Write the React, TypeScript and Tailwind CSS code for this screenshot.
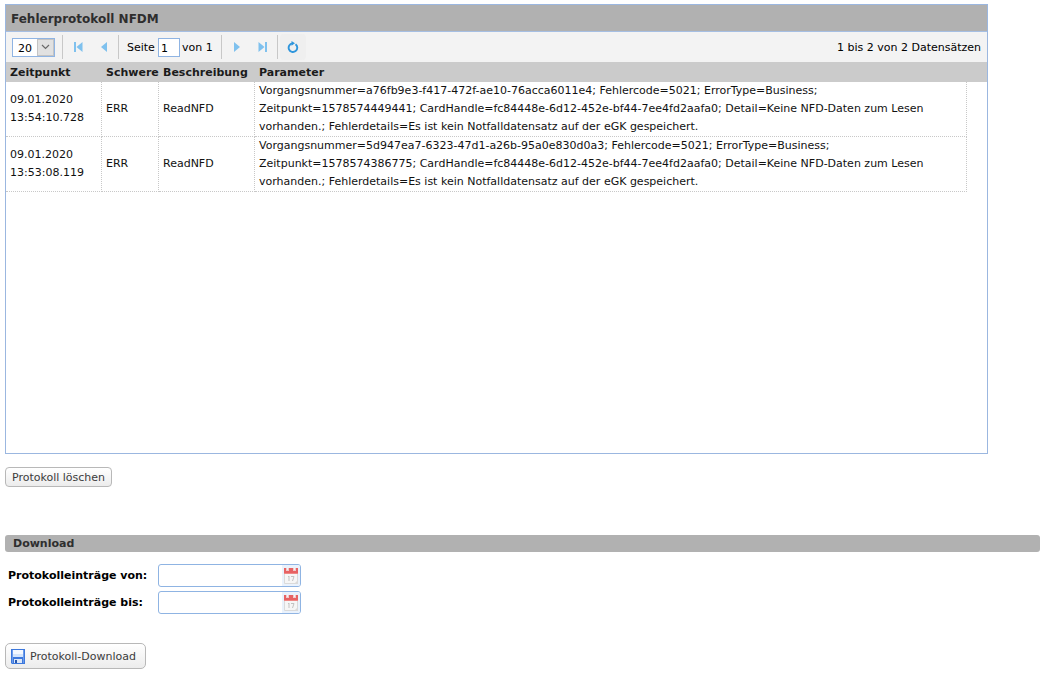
import { useState } from "react";

const entries = [
  {
    date: "09.01.2020",
    time: "13:54:10.728",
    level: "ERR",
    description: "ReadNFD",
    parameters: [
      "Vorgangsnummer=a76fb9e3-f417-472f-ae10-76acca6011e4; Fehlercode=5021; ErrorType=Business;",
      "Zeitpunkt=1578574449441; CardHandle=fc84448e-6d12-452e-bf44-7ee4fd2aafa0; Detail=Keine NFD-Daten zum Lesen",
      "vorhanden.; Fehlerdetails=Es ist kein Notfalldatensatz auf der eGK gespeichert.",
    ],
  },
  {
    date: "09.01.2020",
    time: "13:53:08.119",
    level: "ERR",
    description: "ReadNFD",
    parameters: [
      "Vorgangsnummer=5d947ea7-6323-47d1-a26b-95a0e830d0a3; Fehlercode=5021; ErrorType=Business;",
      "Zeitpunkt=1578574386775; CardHandle=fc84448e-6d12-452e-bf44-7ee4fd2aafa0; Detail=Keine NFD-Daten zum Lesen",
      "vorhanden.; Fehlerdetails=Es ist kein Notfalldatensatz auf der eGK gespeichert.",
    ],
  },
];

function PagerButton({ label, path }: { label: string; path: string }) {
  return (
    <button type="button" aria-label={label} className="flex size-[26px] items-center justify-center">
      <svg width="10" height="10" viewBox="0 0 10 10" fill="#7fc1ee">
        <path d={path} />
      </svg>
    </button>
  );
}

function Separator() {
  return <span className="h-6 w-px bg-[#c8c8c8]" />;
}

function CalendarIcon() {
  return (
    <svg width="14" height="16" viewBox="0 0 14 16">
      <path d="M.5 5.500h13v10H.5z" fill="#f6f6f6" stroke="#dadada" />
      <path d="M0 0h14v5H0z" fill="#e76263" />
      <path d="M0 5h14v1H0z" fill="#ef8886" />
      <path d="M2 0h3v3H2zM9 0h3v3H9z" fill="#efc9c9" />
      <path d="M3 0h1v2H3zM10 0h1v2h-1z" fill="#faf0f0" />
      <path d="M4 9l1-1v5M7 8.500h3l-1.500 4.500" fill="none" stroke="#c2c2c2" />
      <path d="M10 16l4-4v4z" fill="#dadada" />
    </svg>
  );
}

function DateField({ id, label }: { id: string; label: string }) {
  return (
    <div className="flex items-center">
      <label htmlFor={id} className="w-[150px] pt-0.5 text-[11px] font-bold">
        {label}
      </label>
      <div className="flex h-[23px] w-[143px] overflow-hidden rounded-[3px] border border-[#8fb4e3] bg-white">
        <input id={id} type="text" className="min-w-0 flex-1 px-1 text-[11px] outline-none" />
        <button
          type="button"
          aria-label={`${label} Kalender`}
          className="flex w-[18px] items-center justify-center bg-[#eaf2fc]"
        >
          <CalendarIcon />
        </button>
      </div>
    </div>
  );
}

export default function App() {
  const [page, setPage] = useState("1");
  const headCell = "overflow-hidden pt-0.5 pl-1 text-left text-[11px] font-bold whitespace-nowrap";
  const cell = "border-r border-b border-dotted border-[#c8c8c8] pl-1 text-[11px] leading-[18px]";

  return (
    <main className="pt-1 pr-0.5 pl-[5px] font-['Verdana','DejaVu_Sans',sans-serif] text-black">
      <section className="mr-[52px] min-h-[450px] border border-[#9bb7e0]">
        <h1 className="flex h-[27px] items-center border-b border-[#a6bfe3] bg-[#b1b1b1] pt-0.5 pl-[5px] text-[12px] font-bold text-[#2e2e2e]">
          Fehlerprotokoll NFDM
        </h1>
        <div className="flex h-[30px] items-center bg-[#f3f3f3] px-1.5 text-[11px]">
          <div className="relative mr-[7px] h-[19px] w-[43px] border border-[#8fb4e3] bg-white">
            <select
              aria-label="Einträge pro Seite"
              defaultValue="20"
              className="block h-full w-full appearance-none pt-0.5 pl-[5px] text-[11px] outline-none"
            >
              <option>20</option>
              <option>50</option>
            </select>
            <span className="pointer-events-none absolute inset-y-0 right-0 flex w-[17px] items-center justify-center border border-[#c4c4c4] bg-[#e1e1e1]">
              <svg width="9" height="6" viewBox="0 0 9 6" fill="none" stroke="#6a6a6a" strokeWidth="1.200">
                <path d="M1 1l3.500 3.500L8 1" />
              </svg>
            </span>
          </div>
          <Separator />
          <div className="ml-0.5 flex">
            <PagerButton label="Erste Seite" path="M1 0h2v10H1zM9.500 0v10L3.500 5z" />
            <PagerButton label="Vorherige Seite" path="M8 0v10L2 5z" />
          </div>
          <span className="mr-2 ml-px flex">
            <Separator />
          </span>
          <label htmlFor="page" className="w-[31px] pt-0.5">
            Seite
          </label>
          <input
            id="page"
            value={page}
            onChange={(e) => setPage(e.target.value)}
            className="mr-0.5 h-[19px] w-[22px] border border-[#8fb4e3] bg-white pt-0.5 pl-0.5 text-[11px] outline-none"
          />
          <span className="w-[39px] pt-0.5 whitespace-nowrap">von 1</span>
          <Separator />
          <div className="ml-0.5 flex">
            <PagerButton label="Nächste Seite" path="M2 0v10l6-5z" />
            <PagerButton label="Letzte Seite" path="M.5 0v10l6-5zM7 0h2v10H7z" />
          </div>
          <span className="mr-0.5 ml-px flex">
            <Separator />
          </span>
          <button
            type="button"
            aria-label="Aktualisieren"
            className="flex size-[26px] items-center justify-center rounded bg-[#efefef]"
          >
            <svg width="12" height="12" viewBox="0 0 12 12">
              <path d="M8.500 3.200A4.300 4.300 0 1 1 5.500 2.400" fill="none" stroke="#2e95dc" strokeWidth="1.900" />
              <path d="M4.500 0L8 2.300 4.500 4.800z" fill="#2e95dc" />
            </svg>
          </button>
          <span className="ml-auto pt-0.5 whitespace-nowrap">1 bis 2 von 2 Datensätzen</span>
        </div>
        <table className="w-full table-fixed border-separate border-spacing-0">
          <colgroup>
            <col className="w-24" />
            <col className="w-[57px]" />
            <col className="w-24" />
            <col />
            <col className="w-5" />
          </colgroup>
          <thead>
            <tr className="h-5 bg-[#cbcbcb] text-[#1b1b1b]">
              <th className={headCell}>Zeitpunkt</th>
              <th className={headCell}>Schwere</th>
              <th className={headCell}>Beschreibung</th>
              <th className={headCell}>Parameter</th>
              <td />
            </tr>
          </thead>
          <tbody className="text-[#111]">
            {entries.map((entry) => (
              <tr key={entry.time} className="h-[55px]">
                <td className={cell}>
                  {entry.date}
                  <br />
                  {entry.time}
                </td>
                <td className={cell}>{entry.level}</td>
                <td className={cell}>{entry.description}</td>
                <td className={cell}>
                  {entry.parameters.map((line) => (
                    <div key={line}>{line}</div>
                  ))}
                </td>
                <td />
              </tr>
            ))}
          </tbody>
        </table>
      </section>

      <button
        type="button"
        className="mt-[13px] flex h-5 w-[107px] items-center justify-center rounded border border-[#b8b8b8] bg-linear-to-b from-white to-[#ececec] pt-0.5 text-[11px] whitespace-nowrap text-[#3c3c3c]"
      >
        Protokoll löschen
      </button>

      <section className="mt-12">
        <h2 className="flex h-[17px] items-center rounded-[3px] bg-[#b1b1b1] pt-0.5 pl-2 text-[11px] font-bold text-[#2e2e2e]">
          Download
        </h2>
        <form className="mt-3" onSubmit={(e) => e.preventDefault()}>
          <div className="flex flex-col gap-1 pl-[3px]">
            <DateField id="from" label="Protokolleinträge von:" />
            <DateField id="to" label="Protokolleinträge bis:" />
          </div>
          <button
            type="submit"
            className="mt-[29px] flex h-[26px] w-[141px] items-center gap-[5px] rounded-[5px] border border-[#b8b8b8] bg-linear-to-b from-white to-[#ececec] pl-[5px] text-[11px] whitespace-nowrap text-[#3c3c3c]"
          >
            <svg width="14" height="15" viewBox="0 0 14 15" className="shrink-0">
              <path d="M0 0h14v15H1l-1-1z" fill="#3d78dc" />
              <path d="M1 1h1v13H1zM12 1h1v13h-1z" fill="#6b9cec" />
              <path d="M2 1h10v7H2z" fill="#f3f8ff" />
              <path d="M2 5h10v3H2z" fill="#d3e4fb" />
              <path d="M3 10h8v4H3z" fill="#dce7f7" />
              <path d="M4 11h2v3H4z" fill="#2456ae" />
            </svg>
            <span className="pt-0.5">Protokoll-Download</span>
          </button>
        </form>
      </section>
    </main>
  );
}
